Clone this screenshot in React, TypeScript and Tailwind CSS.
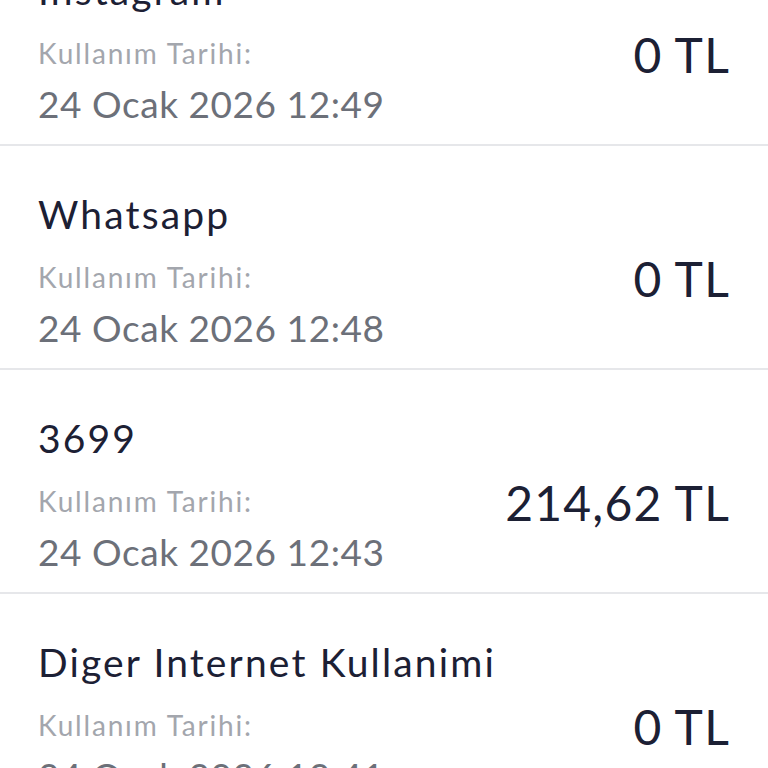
import React from "react";

const rows = [
  { title: "Instagram", date: "24 Ocak 2026 12:49", amount: "0 TL" },
  { title: "Whatsapp", date: "24 Ocak 2026 12:48", amount: "0 TL" },
  { title: "3699", date: "24 Ocak 2026 12:43", amount: "214,62 TL" },
  { title: "Diger Internet Kullanimi", date: "24 Ocak 2026 12:41", amount: "0 TL" },
];

export default function App() {
  return (
    <div className="w-[768px] h-[768px] overflow-hidden bg-white" style={{ fontFamily: "Lato, 'Noto Sans', sans-serif" }}>
      <div className="-mt-[78px] flex flex-col">
        {rows.map((r, i) => (
          <div key={i} className={`flex flex-col px-[38px] pt-[44px] h-[224px] ${i < rows.length - 1 ? "border-b-2 border-[#e6e7ea]" : ""}`}>
            <div className="text-[39px] leading-[48px] tracking-[0.055em] text-[#1c2034] whitespace-nowrap">{r.title}</div>
            <div className="flex items-start justify-between">
              <div className="flex flex-col">
                <div className="text-[28px] leading-[40px] tracking-[0.065em] text-[#a3a6ad] mt-[19px] whitespace-nowrap">Kullanım Tarihi:</div>
                <div className="text-[37px] leading-[46px] tracking-[0.015em] text-[#6c7079] mt-[8px] whitespace-nowrap">{r.date}</div>
              </div>
              <div className="text-[48px] leading-[56px] tracking-[0.025em] text-[#1c2034] mt-[13px] whitespace-nowrap">{r.amount}</div>
            </div>
          </div>
        ))}
      </div>
    </div>
  );
}
